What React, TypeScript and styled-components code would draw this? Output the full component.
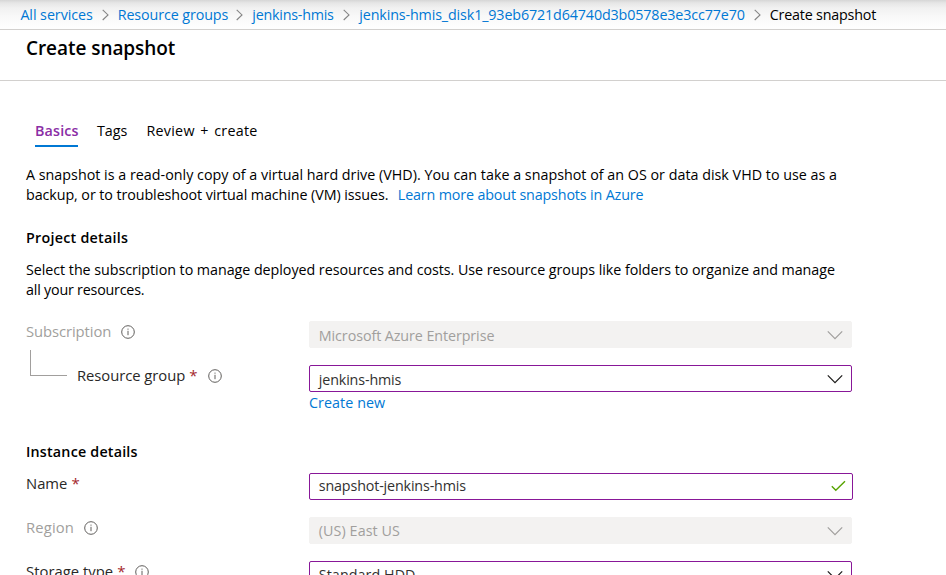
import React from "react";
import styled, { createGlobalStyle } from "styled-components";

const GlobalStyle = createGlobalStyle`
  * { box-sizing: border-box; }
  body {
    margin: 0;
    background: #fff;
    color: #000;
    font-family: "Open Sans", "Segoe UI", sans-serif;
    font-size: 14.3px;
    overflow: hidden;
  }
`;

const Page = styled.div`
  height: 575px;
  overflow: hidden;
`;

const BreadcrumbBar = styled.nav`
  display: grid;
  grid-template-columns: 97.3px 134.6px 107px 410.5px auto;
  height: 30px;
  padding-left: 20.4px;
  border-bottom: 1px solid #d2d0ce;
  background: linear-gradient(#d6d6d6 0, #e6e6e6 3px, #f1f1f1 8px, #f9f9f9 17px, #fefefe 28px);
`;

const Crumb = styled.div<{ $current?: boolean; $track: number }>`
  display: flex;
  justify-content: space-between;
  padding-right: 9px;
  line-height: 29px;
  white-space: nowrap;
  letter-spacing: ${(p) => p.$track}px;
  color: ${(p) => (p.$current ? "#000" : "#0078d4")};

  svg { flex: none; margin-top: 9px; }
`;

const Header = styled.header`
  height: 51px;
  padding-left: 26px;
  border-bottom: 1px solid #d2d0ce;
`;

const Title = styled.h1`
  margin: 0;
  font-size: 19px;
  font-weight: 600;
  line-height: 36px;
  letter-spacing: -0.06px;
`;

const Content = styled.main`
  padding: 39px 0 0 26px;
`;

const Tabs = styled.div`
  display: flex;
  gap: 19px;
  height: 27px;
  padding-left: 9px;
  line-height: 21px;
`;

const Tab = styled.div<{ $active?: boolean; $width: number; $track: number; $word?: number }>`
  width: ${(p) => p.$width}px;
  height: 27px;
  white-space: nowrap;
  letter-spacing: ${(p) => p.$track}px;
  word-spacing: ${(p) => p.$word ?? 0}px;
  font-weight: ${(p) => (p.$active ? 600 : 400)};
  color: ${(p) => (p.$active ? "#8a2da5" : "#000")};
  border-bottom: 2px solid ${(p) => (p.$active ? "#0078d4" : "transparent")};
`;

const Paragraph = styled.p<{ $top: number }>`
  margin: ${(p) => p.$top}px 0 0;
  line-height: 20px;
`;

const Line = styled.span<{ $track: number }>`
  display: block;
  white-space: nowrap;
  letter-spacing: ${(p) => p.$track}px;
`;

const Link = styled.a<{ $track: number; $left?: number }>`
  margin-left: ${(p) => p.$left ?? 0}px;
  color: #0078d4;
  letter-spacing: ${(p) => p.$track}px;
`;

const SectionTitle = styled.h2<{ $top: number; $track: number }>`
  margin: ${(p) => p.$top}px 0 0;
  font-size: 14.3px;
  font-weight: 600;
  line-height: 20px;
  letter-spacing: ${(p) => p.$track}px;
`;

const Field = styled.div<{ $top: number }>`
  display: grid;
  grid-template-columns: 283px 544px;
  align-items: start;
  height: 27px;
  margin-top: ${(p) => p.$top}px;
`;

const LabelCell = styled.div`
  display: flex;
  height: 27px;
`;

const Label = styled.label<{ $muted?: boolean; $track?: number }>`
  font-size: 14.8px;
  line-height: 20px;
  white-space: nowrap;
  letter-spacing: ${(p) => p.$track ?? 0}px;
  color: ${(p) => (p.$muted ? "#a19f9d" : "#292827")};
`;

const Required = styled.span`
  margin-left: 4px;
  color: #a4262c;
  font-size: 15px;
  line-height: 20px;
`;

const InfoSvg = styled.svg<{ $left: number }>`
  flex: none;
  margin: 4px 0 0 ${(p) => p.$left}px;
`;

const Connector = styled.div`
  width: 37px;
  height: 26px;
  margin: -15px 10px 0 4px;
  border-left: 1px solid #a19f9d;
  border-bottom: 1px solid #a19f9d;
`;

const Box = styled.div<{ $disabled?: boolean; $wide?: boolean; $track: number; $line: number }>`
  display: flex;
  justify-content: space-between;
  width: ${(p) => (p.$wide ? 544 : 543)}px;
  height: 27px;
  padding: 0 ${(p) => (p.$wide ? 5.7 : 7.7)}px 0 8.8px;
  border: 1px solid ${(p) => (p.$disabled ? "#f3f2f1" : "#881798")};
  border-radius: 2px;
  background: ${(p) => (p.$disabled ? "#f3f2f1" : "#fff")};
  color: ${(p) => (p.$disabled ? "#a19f9d" : "#323130")};
  line-height: ${(p) => p.$line}px;
  white-space: nowrap;
  letter-spacing: ${(p) => p.$track}px;

  svg { flex: none; margin-top: ${(p) => (p.$wide ? 6 : 8)}px; }
`;

const CreateNew = styled.div`
  margin-left: 283px;
  height: 22px;
  line-height: 22px;
  font-weight: 500;
`;

const Separator = () => (
  <svg width="7" height="12" viewBox="0 0 7 12" fill="none" stroke="#858585" strokeWidth="1.1">
    <path d="M.7.8 6 5.9.7 11" />
  </svg>
);

const Info = ({ left }: { left: number }) => (
  <InfoSvg $left={left} width="14" height="14" viewBox="0 0 14 14" fill="none" stroke="#605e5c">
    <circle cx="7" cy="7" r="6.3" />
    <path d="M7 5.8v4.4M7 3.6v1.1" />
  </InfoSvg>
);

const Chevron = ({ muted }: { muted?: boolean }) => (
  <svg width="16" height="10" viewBox="0 0 16 10" fill="none" stroke={muted ? "#a19f9d" : "#1b1a19"} strokeWidth="1.2">
    <path d="M.8 1.4 8 8.6l7.2-7.2" />
  </svg>
);

const Check = () => (
  <svg width="15" height="12" viewBox="0 0 15 12" fill="none" stroke="#57a300" strokeWidth="1.4">
    <path d="m.8 6.2 4 4L14 1.2" />
  </svg>
);

export default function App() {
  return (
    <>
      <GlobalStyle />
      <Page>
        <BreadcrumbBar>
          <Crumb $track={-0.06}>All services<Separator /></Crumb>
          <Crumb $track={-0.1}>Resource groups<Separator /></Crumb>
          <Crumb $track={-0.23}>jenkins-hmis<Separator /></Crumb>
          <Crumb $track={-0.13}>jenkins-hmis_disk1_93eb6721d64740d3b0578e3e3cc77e70<Separator /></Crumb>
          <Crumb $track={-0.19} $current>Create snapshot</Crumb>
        </BreadcrumbBar>
        <Header>
          <Title>Create snapshot</Title>
        </Header>
        <Content>
          <Tabs>
            <Tab $active $width={43} $track={0.15}>Basics</Tab>
            <Tab $width={30.5} $track={0}>Tags</Tab>
            <Tab $width={111} $track={0.25} $word={1.6}>Review + create</Tab>
          </Tabs>
          <Paragraph $top={18}>
            <Line $track={0.009}>
              A snapshot is a read-only copy of a virtual hard drive (VHD). You can take a snapshot of an OS or data disk VHD to use as a
            </Line>
            <Line $track={-0.078}>
              backup, or to troubleshoot virtual machine (VM) issues.
              <Link $track={-0.145} $left={9.5}>Learn more about snapshots in Azure</Link>
            </Line>
          </Paragraph>
          <SectionTitle $top={23} $track={0.26}>Project details</SectionTitle>
          <Paragraph $top={12}>
            <Line $track={-0.048}>
              Select the subscription to manage deployed resources and costs. Use resource groups like folders to organize and manage
            </Line>
            <Line $track={-0.21}>all your resources.</Line>
          </Paragraph>
          <Field $top={21}>
            <LabelCell>
              <Label $muted $track={-0.08}>Subscription</Label>
              <Info left={10} />
            </LabelCell>
            <Box $disabled $line={28} $track={-0.08}>Microsoft Azure Enterprise<Chevron muted /></Box>
          </Field>
          <Field $top={17}>
            <LabelCell>
              <Connector />
              <Label $track={-0.05}>Resource group</Label>
              <Required>*</Required>
              <Info left={10.5} />
            </LabelCell>
            <Box $line={28} $track={-0.14}>jenkins-hmis<Chevron /></Box>
          </Field>
          <CreateNew><Link $track={0.07}>Create new</Link></CreateNew>
          <SectionTitle $top={28} $track={0.2}>Instance details</SectionTitle>
          <Field $top={11}>
            <LabelCell>
              <Label $track={0}>Name</Label>
              <Required>*</Required>
            </LabelCell>
            <Box $wide $line={24} $track={-0.15}>snapshot-jenkins-hmis<Check /></Box>
          </Field>
          <Field $top={17}>
            <LabelCell>
              <Label $muted $track={0.15}>Region</Label>
              <Info left={10} />
            </LabelCell>
            <Box $disabled $line={26} $track={0.08}>(US) East US<Chevron muted /></Box>
          </Field>
          <Field $top={17}>
            <LabelCell>
              <Label $track={0.03}>Storage type</Label>
              <Required>*</Required>
              <Info left={10} />
            </LabelCell>
            <Box $line={26} $track={0.07}>Standard HDD<Chevron /></Box>
          </Field>
        </Content>
      </Page>
    </>
  );
}
